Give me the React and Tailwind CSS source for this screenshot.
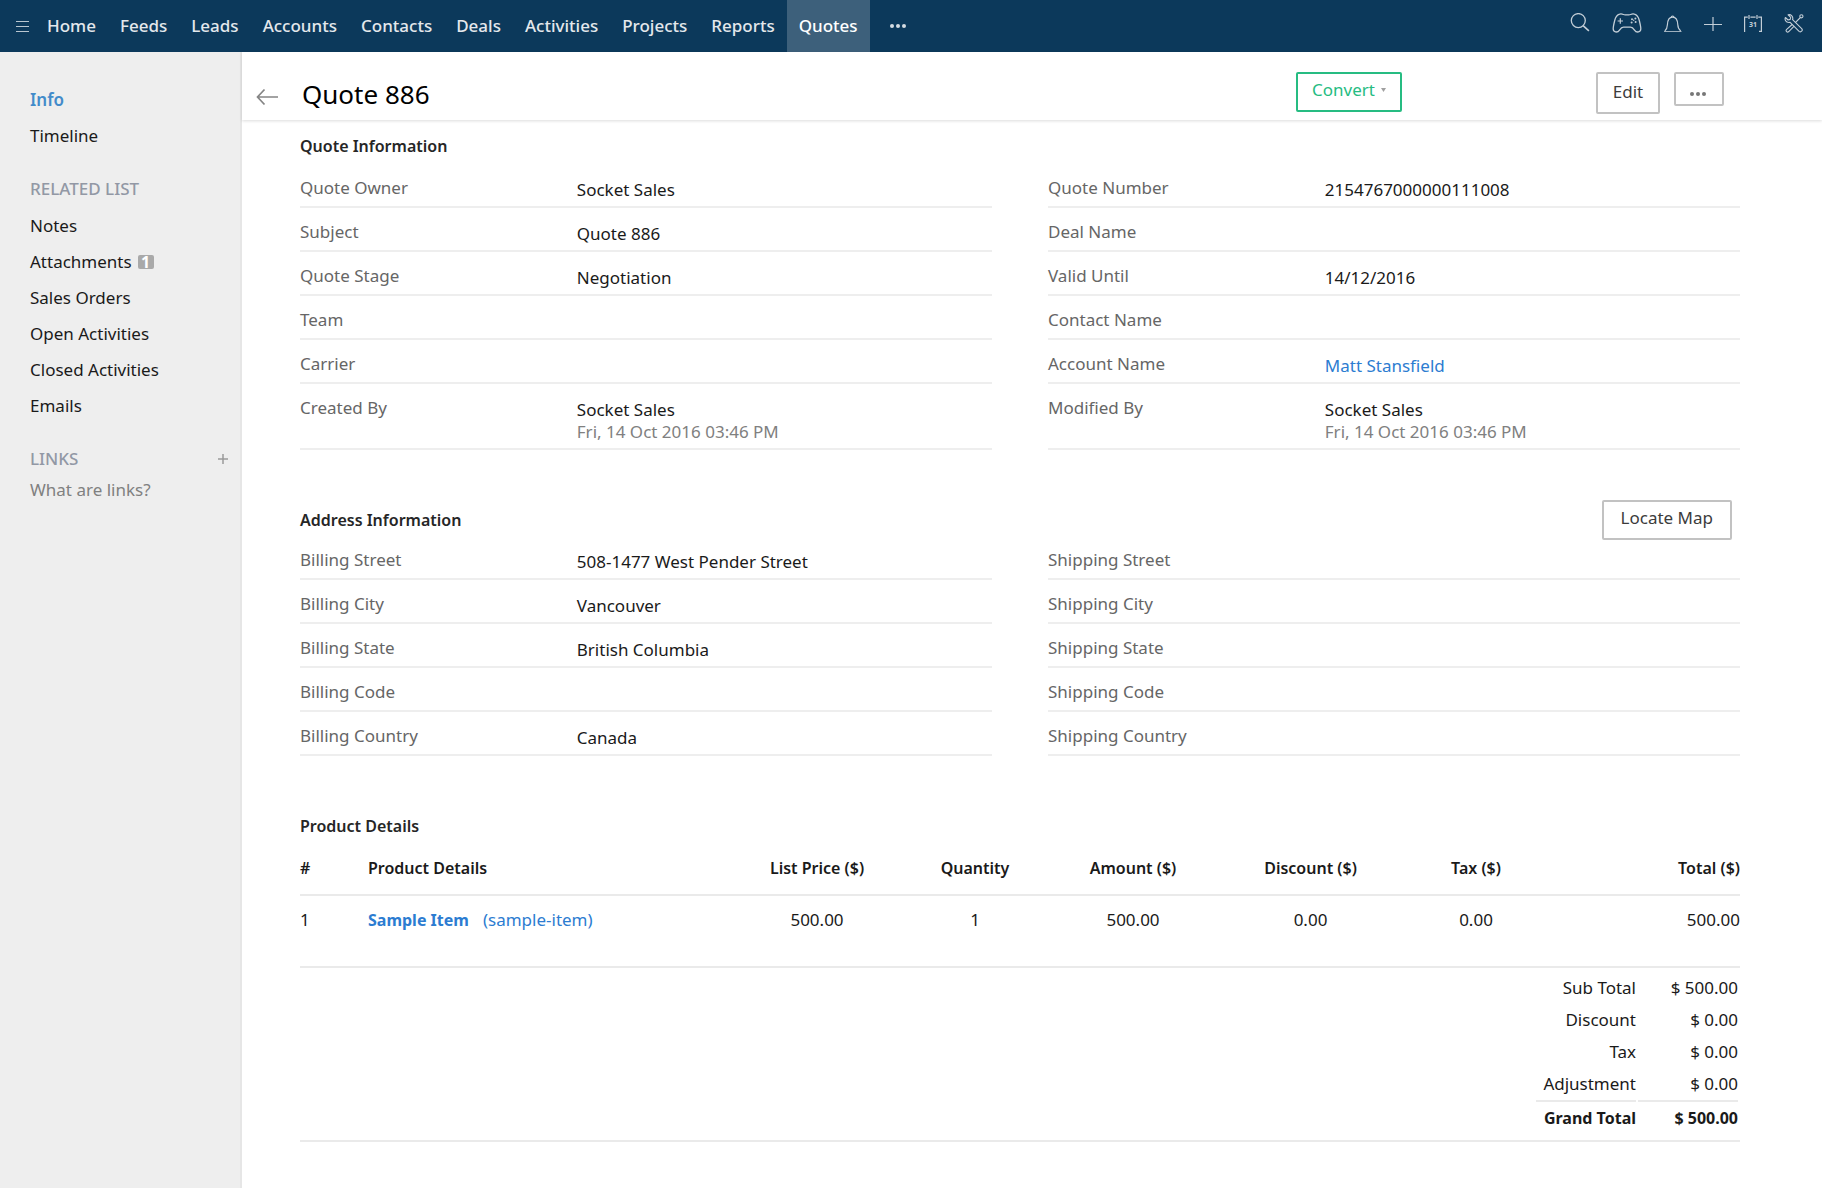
const navItems = [
  "Home",
  "Feeds",
  "Leads",
  "Accounts",
  "Contacts",
  "Deals",
  "Activities",
  "Projects",
  "Reports",
  "Quotes",
];

const relatedList = [
  { label: "Notes" },
  { label: "Attachments", count: 1 },
  { label: "Sales Orders" },
  { label: "Open Activities" },
  { label: "Closed Activities" },
  { label: "Emails" },
];

const quoteLeft = [
  { label: "Quote Owner", value: "Socket Sales" },
  { label: "Subject", value: "Quote 886" },
  { label: "Quote Stage", value: "Negotiation" },
  { label: "Team" },
  { label: "Carrier" },
  { label: "Created By", value: "Socket Sales", date: "Fri, 14 Oct 2016 03:46 PM" },
];

const quoteRight = [
  { label: "Quote Number", value: "2154767000000111008" },
  { label: "Deal Name" },
  { label: "Valid Until", value: "14/12/2016" },
  { label: "Contact Name" },
  { label: "Account Name", value: "Matt Stansfield", link: true },
  { label: "Modified By", value: "Socket Sales", date: "Fri, 14 Oct 2016 03:46 PM" },
];

const billing = [
  { label: "Billing Street", value: "508-1477 West Pender Street" },
  { label: "Billing City", value: "Vancouver" },
  { label: "Billing State", value: "British Columbia" },
  { label: "Billing Code" },
  { label: "Billing Country", value: "Canada" },
];

const shipping = [
  { label: "Shipping Street" },
  { label: "Shipping City" },
  { label: "Shipping State" },
  { label: "Shipping Code" },
  { label: "Shipping Country" },
];

const totals = [
  { label: "Sub Total", value: "$ 500.00" },
  { label: "Discount", value: "$ 0.00" },
  { label: "Tax", value: "$ 0.00" },
  { label: "Adjustment", value: "$ 0.00" },
];

function MenuIcon() {
  return (
    <svg width="13" height="11" viewBox="0 0 13 11" stroke="currentColor" strokeWidth="1">
      <path d="M0 .5h13M0 5.5h13M0 10.5h13" />
    </svg>
  );
}

function SearchIcon() {
  return (
    <svg width="20" height="20" viewBox="0 0 20 20" fill="none" stroke="currentColor" strokeWidth="1.3">
      <circle cx="8.3" cy="7.6" r="7" />
      <path d="M13.3 12.8l5.6 5" strokeWidth="1.6" />
    </svg>
  );
}

function GamepadIcon() {
  return (
    <svg width="30" height="20" viewBox="0 0 30 20" fill="none" stroke="currentColor" strokeWidth="1.3">
      <path d="M7.6 1.2C10 .3 11.6 1.9 13 1.9h4c1.4 0 3-1.6 5.4-.7 3 .8 4 2.6 4.900 6.300.9 3.600 1.500 6.800 1.500 8.300 0 3.400-4.200 4.400-6.300 1.300-1.500-2.300-2.200-3-4-3h-7c-1.800 0-2.500.7-4 3-2.100 3.100-6.300 2.100-6.300-1.300 0-1.500.6-4.700 1.500-8.300C3.600 3.800 4.600 2 7.600 1.200z" />
      <path d="M8.3 5.3v5.400M5.600 8H11" strokeWidth="1.2" />
      <g fill="currentColor" stroke="none">
        <circle cx="20" cy="6.3" r="1" />
        <circle cx="23.4" cy="5.4" r="1" />
        <circle cx="19.6" cy="9.4" r="1" />
        <circle cx="23.6" cy="8.9" r="1" />
        <circle cx="21.7" cy="7.3" r=".7" />
      </g>
    </svg>
  );
}

function BellIcon() {
  return (
    <svg width="18" height="18" viewBox="0 0 18 18" fill="none" stroke="currentColor" strokeWidth="1.2">
      <path d="M.8 17c2-1.600 2.500-3.400 2.600-6.200.2-4.700 2-7.600 5.200-7.600s5 2.900 5.200 7.600c.1 2.800.9 4.600 2.900 6.200" />
      <path d="M7.3 3.2c0-1.600 2.600-1.600 2.600 0" />
      <path d="M0 17.5h17.5" strokeWidth=".8" />
    </svg>
  );
}

function PlusIcon() {
  return (
    <svg width="18" height="18" viewBox="0 0 18 18" fill="none" stroke="currentColor" strokeWidth="1.2">
      <path d="M9 3v14M0 10.5h18" />
    </svg>
  );
}

function CalendarIcon() {
  return (
    <svg width="18" height="18" viewBox="0 0 18 18" fill="none" stroke="currentColor" strokeWidth="1.2">
      <path d="M.6 18V3.1h3.2M14.2 3.1h3.2V17.3h-2.400M6.400 3.100h5.200M5 1v4M13 1v4" />
      <text x="9" y="13" textAnchor="middle" fontSize="7" fontWeight="700" fill="currentColor" stroke="none">
        31
      </text>
    </svg>
  );
}

function ToolsIcon() {
  return (
    <svg width="20" height="20" viewBox="0 0 19 20" fill="none" stroke="currentColor" strokeWidth="1.1" strokeLinejoin="round">
      {/* wrench */}
      <path d="M3.600 1.800l2.600 2.600-.5 2-2.100.6L.9 4.500C0 6.700 1.200 9.500 4.300 9.500l1.300-.2 9 9c1.800 1.500 4.200-.8 2.600-2.700L8.100 6.700C9 3.500 6.600 1.100 3.600 1.800z" />
      {/* screwdriver */}
      <path d="M10.800 9.700l5.100-5.200M7.700 11.500l-5.800 5.200c-1 1.400.8 3 2.100 2.100l5.400-5.500" />
      <circle cx="16.900" cy="3.300" r="1.600" />
    </svg>
  );
}

const tools = [
  { label: "Search", icon: <SearchIcon /> },
  { label: "Gamescope", icon: <GamepadIcon /> },
  { label: "Notifications", icon: <BellIcon /> },
  { label: "Create", icon: <PlusIcon /> },
  { label: "Calendar", icon: <CalendarIcon /> },
  { label: "Setup", icon: <ToolsIcon /> },
];

function Dots() {
  return (
    <svg width="16" height="4" viewBox="0 0 16 4" fill="currentColor">
      <circle cx="2" cy="2" r="2" />
      <circle cx="8" cy="2" r="2" />
      <circle cx="14" cy="2" r="2" />
    </svg>
  );
}

function TopBar() {
  return (
    <header className="flex h-[52px] items-center justify-between bg-[#0c395b] text-[#e4e8ec]">

      <nav className="flex h-full items-center">

        <button aria-label="Menu" className="pl-4 pr-[6px] text-[#b9c6d0]">
          <MenuIcon />
        </button>

        {navItems.map((item) => (
          <a
            key={item}
            href="#"
            className={
              item === "Quotes"
                ? "flex h-full items-center bg-[#3d607b] px-3 font-medium text-white"
                : "flex h-full items-center px-3 font-medium"
            }
          >
            {item}
          </a>
        ))}

        <button aria-label="More modules" className="px-5 text-[#d5dce2]">
          <Dots />
        </button>

      </nav>

      <div className="flex items-center gap-[22px] pr-[18px] pb-[6px] text-[#c3ced7]">
        {tools.map((tool) => (
          <button key={tool.label} aria-label={tool.label}>
            {tool.icon}
          </button>
        ))}
      </div>

    </header>
  );
}

function Sidebar() {
  return (
    <aside className="w-[242px] shrink-0 border-r-2 border-[#e6e6e6] bg-[#eeeeee] pt-[30px] pl-[30px] pr-3 text-[#1a1a1a]">

      <a href="#" className="block leading-9 font-semibold text-[#428bca]">Info</a>
      <a href="#" className="block leading-9">Timeline</a>

      <h2 className="pt-[18px] pb-[2px] leading-[34px] font-medium text-[#9298a5]">RELATED LIST</h2>

      {relatedList.map((item) => (
        <a key={item.label} href="#" className="flex items-center gap-[6px] leading-9">
          {item.label}
          {item.count && (
            <span className="flex h-[14px] w-4 items-center justify-center rounded-xs bg-[#a9a9a9] text-base leading-none font-bold text-white">
              {item.count}
            </span>
          )}
        </a>
      ))}

      <div className="flex items-center justify-between pt-[18px] pb-[2px]">
        <h2 className="leading-[34px] font-medium text-[#9298a5]">LINKS</h2>
        <button aria-label="Add link" className="text-[#9a9a9a]">
          <svg width="10" height="10" viewBox="0 0 10 10" stroke="currentColor" strokeWidth="1.5">
            <path d="M5 0v10M0 5h10" />
          </svg>
        </button>
      </div>

      <a href="#" className="block leading-6 text-[#808080]">What are links?</a>

    </aside>
  );
}

function FieldList({ fields }) {
  return (
    <dl>
      {fields.map((field) => (
        <div key={field.label} className="flex min-h-11 border-b-2 border-[#eeeeee] pb-[5px] leading-[22px]">

          <dt className="w-2/5 pt-[13px] text-[#666666]">{field.label}</dt>

          <dd className="w-3/5 pt-[15px] text-[#1a1a1a]">
            {field.link ? <a href="#" className="text-[#2c7cd1]">{field.value}</a> : field.value}
            {field.date && <div className="text-[#808080]">{field.date}</div>}
          </dd>

        </div>
      ))}
    </dl>
  );
}

function ProductTable() {
  return (
    <table className="w-full table-fixed border-separate border-spacing-0 text-center leading-6 text-[#1a1a1a]">

      <thead className="text-base leading-6">
        <tr className="*:border-b-2 *:border-[#eaeaea] *:pt-[18px] *:pb-[14px] *:font-semibold">
          <th className="w-[68px] text-left">#</th>
          <th className="text-left">Product Details</th>
          <th className="w-[158px]">List Price ($)</th>
          <th className="w-[158px]">Quantity</th>
          <th className="w-[158px]">Amount ($)</th>
          <th className="w-[197px]">Discount ($)</th>
          <th className="w-[134px]">Tax ($)</th>
          <th className="w-[197px] text-right">Total ($)</th>
        </tr>
      </thead>

      <tbody>
        <tr className="*:border-b-2 *:border-[#eaeaea] *:pt-3 *:pb-[34px]">
          <td className="text-left">1</td>
          <td className="text-left text-[#2c7cd1]">
            <a href="#" className="mr-[14px] text-base font-bold">Sample Item</a>
            <a href="#">(sample-item)</a>
          </td>
          <td>500.00</td>
          <td>1</td>
          <td>500.00</td>
          <td>0.00</td>
          <td>0.00</td>
          <td className="text-right">500.00</td>
        </tr>
      </tbody>

    </table>
  );
}

function Totals() {
  return (
    <div className="flex justify-end border-b-2 border-[#eaeaea] pt-1 pb-[6px] text-[#1a1a1a]">

      <table className="border-separate border-spacing-x-[2px] border-spacing-y-0 text-right leading-8">

        <tbody>
          {totals.map((row) => (
            <tr key={row.label}>
              <th scope="row" className="w-[100px] font-normal">{row.label}</th>
              <td className="w-[100px]">{row.value}</td>
            </tr>
          ))}
          <tr className="text-base leading-8 font-bold *:border-t-2 *:border-[#eaeaea]">
            <th scope="row">Grand Total</th>
            <td>$ 500.00</td>
          </tr>
        </tbody>

      </table>

    </div>
  );
}

function App() {
  return (
    <div className="flex min-h-screen flex-col bg-white font-['Noto_Sans',sans-serif] text-[17px]">

      <TopBar />

      <div className="flex flex-1">

        <Sidebar />

        <main className="min-w-0 flex-1">

          {/* Title bar */}
          <div className="flex h-[68px] items-start pt-5 pl-[14px] pr-[98px] shadow-[0_1px_3px_rgba(0,0,0,0.14)]">

            <button aria-label="Back" className="mt-4 text-[#858585]">
              <svg width="22" height="18" viewBox="0 0 22 18" fill="none" stroke="currentColor" strokeWidth="1.7">
                <path d="M22 9H1.5M8.5 1.5L1.5 9l7 7.5" />
              </svg>
            </button>

            <h1 className="ml-6 flex-1 text-[26px] leading-[44px] text-black">Quote 886</h1>

            <button className="flex h-10 items-center gap-[6px] rounded-xs border-2 border-[#26bc82] px-[14px] pb-1 text-[#26bc82]">
              Convert
              <svg width="5" height="4" viewBox="0 0 5 4" fill="#a0a0a0">
                <path d="M0 0h5L2.5 4z" />
              </svg>
            </button>

            <button className="ml-[194px] h-[42px] w-16 rounded-xs border-2 border-[#c2c2c2] pb-[2px] text-[#3c3c3c]">
              Edit
            </button>

            <button
              aria-label="More actions"
              className="ml-[14px] flex h-[34px] w-[50px] items-center rounded-xs border-2 border-[#c2c2c2] px-[14px] pt-[10px] text-[#777777]"
            >
              <Dots />
            </button>

          </div>

          <div className="pt-[14px] pl-[58px] pr-[82px]">

            {/* Quote Information */}
            <section>
              <h2 className="mb-[6px] text-base font-semibold text-[#262626]">Quote Information</h2>
              <div className="grid grid-cols-2 gap-14">
                <FieldList fields={quoteLeft} />
                <FieldList fields={quoteRight} />
              </div>
            </section>

            {/* Address Information */}
            <section className="mt-[50px]">
              <div className="flex h-9 items-start justify-between">
                <h2 className="text-base leading-10 font-semibold text-[#262626]">Address Information</h2>
                <button className="mr-2 h-10 rounded-xs border-2 border-[#c2c2c2] px-[17px] pb-1 text-[#3c3c3c]">
                  Locate Map
                </button>
              </div>
              <div className="grid grid-cols-2 gap-14">
                <FieldList fields={billing} />
                <FieldList fields={shipping} />
              </div>
            </section>

            {/* Product Details */}
            <section className="mt-[58px]">
              <h2 className="text-base font-semibold text-[#262626]">Product Details</h2>
              <ProductTable />
              <Totals />
            </section>

          </div>

        </main>

      </div>

    </div>
  );
}

export default App;
